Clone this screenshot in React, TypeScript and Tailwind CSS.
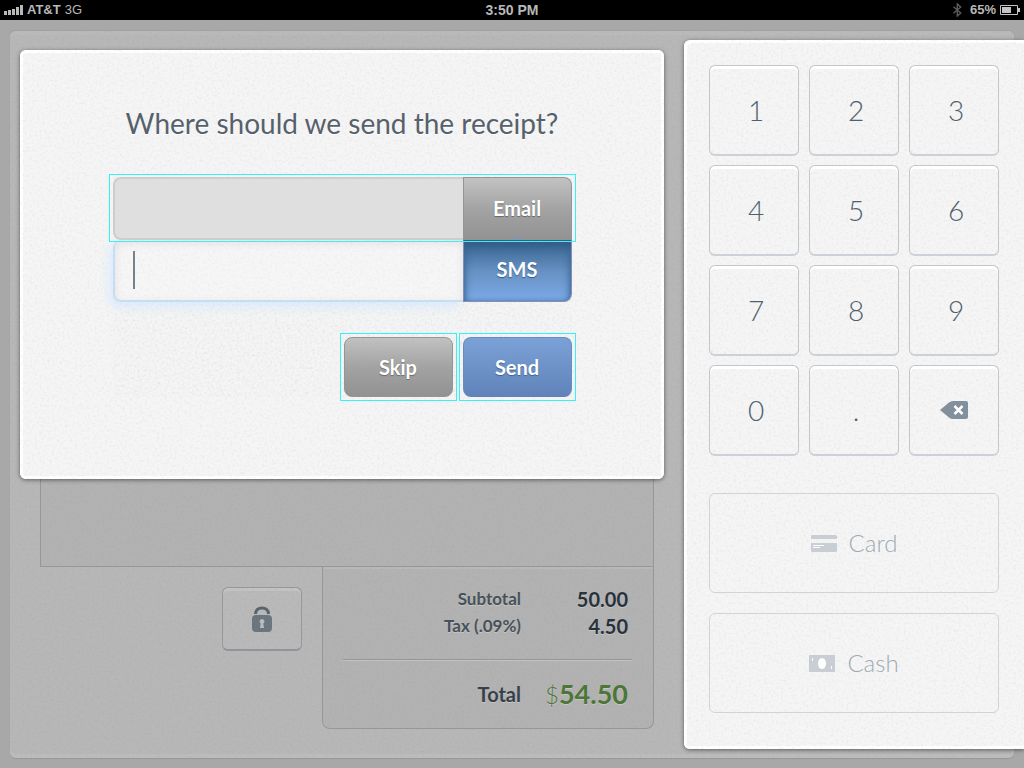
import type { ReactNode } from "react";

const KEYS = ["1", "2", "3", "4", "5", "6", "7", "8", "9", "0", "."];

const Paper = ({ id, strength }: { id: string; strength: string }) => {
  return <svg aria-hidden="true" className={`absolute inset-0 w-full h-full pointer-events-none ${strength}`}>
    <filter id={id}>
      <feTurbulence type="fractalNoise" baseFrequency="0.4" numOctaves="4" seed="8" />
      <feColorMatrix type="matrix" values="0 0 0 0 0.3  0 0 0 0 0.3  0 0 0 0 0.3  2.4 0 0 0 -1.1" />
    </filter>
    <rect width="100%" height="100%" filter={`url(#${id})`} />
  </svg>
}

const StatusBar = () => {
  return <header className="grid grid-cols-3 items-center h-5 px-1 bg-black text-[#b8b8b8] text-[13px] leading-5 font-bold font-['Liberation_Sans',sans-serif]">
    <div className="flex items-center gap-1">
      <svg width="19" height="10" viewBox="0 0 19 10" fill="currentColor" aria-hidden="true">
        <path d="M0 6h3v4H0zM4 5h3v5H4zM8 4h3v6H8zM12 2h3v8h-3zM16 0h3v10h-3z" />
      </svg>
      <span>AT&amp;T</span>
      <span className="font-normal">3G</span>
    </div>
    <div className="text-center text-sm leading-5">3:50 PM</div>
    <div className="flex items-center justify-end gap-1">
      <svg width="9" height="14" viewBox="0 0 9 14" fill="none" stroke="#5c5c5c" strokeWidth="1.4" className="mr-1" aria-hidden="true">
        <path d="M0.500 3.800l7.200 6.200-3.400 3V1l3.400 3L0.500 10.200" />
      </svg>
      <span>65%</span>
      <svg width="20" height="10" viewBox="0 0 20 10" fill="none" aria-hidden="true">
        <path d="M0.500 0.500h17v9h-17z" stroke="#c4c4c4" />
        <path d="M18 3h2v4h-2z" fill="#c4c4c4" />
        <path d="M2 2h9v6H2z" fill="#c4c4c4" />
      </svg>
    </div>
  </header>
}

const Totals = () => {
  return <dl className="w-[332px] h-[162px] pl-5 pr-[21px] pt-[18px] border border-t-0 border-[#979797] rounded-b-lg bg-[#b2b2b2] text-[#465058] font-bold shadow-[inset_0_2px_0_#b9b9b9] [text-shadow:0_1px_0_#c6c6c6]">
    <div className="flex justify-end items-center h-[27px] pr-1">
      <dt className="text-[17px]">Subtotal</dt>
      <dd className="w-[107px] text-right text-xl text-[#252f39]">50.00</dd>
    </div>
    <div className="flex justify-end items-center h-[27px] pr-1">
      <dt className="text-[17px]">Tax (.09%)</dt>
      <dd className="w-[107px] text-right text-xl text-[#252f39]">4.50</dd>
    </div>
    <div className="flex justify-end items-center mt-5 pt-4 pr-1 border-t border-[#959595] shadow-[inset_0_1px_0_#c4c4c4]">
      <dt className="text-xl text-[#343e48]">Total</dt>
      <dd className="w-[107px] text-right text-[27px] leading-9 text-[#4b7535]"><span className="text-2xl font-light">$</span>54.50</dd>
    </div>
  </dl>
}

const Sheet = () => {
  return <section className="relative col-start-1 row-start-1 flex flex-col m-[10px] pl-[30px] pt-[30px] pr-[360px] pb-[29px] rounded-md bg-[#b7b7b7] border-t border-[#a0a0a0] shadow-[inset_0_4px_0_#bababa,inset_0_-4px_0_#bcbcbc,0_1px_1px_#979797]">
    <div className="grow border border-[#979797] bg-[#b2b2b2]" />
    <div className="flex justify-end items-start">
      <button type="button" aria-label="Lock" className="flex items-center justify-center w-20 h-16 mt-5 mr-5 rounded-md border border-[#94999d] border-b-2 border-b-[#8f959b] bg-[#b9b9b9] shadow-[inset_0_3px_0_#c3c3c3]">
        <svg width="22" height="26" viewBox="0 0 22 26" fill="none" aria-hidden="true">
          <path d="M4.500 8C4.500 4 7.500 2 11 2s6.500 2 6.500 6" stroke="#56626d" strokeWidth="3" />
          <rect x="1" y="9" width="20" height="17" rx="4" fill="#6a757e" />
          <path d="M11 13a2.500 2.500 0 0 1 1.300 4.600L13 22H9l.7-4.400A2.500 2.500 0 0 1 11 13z" fill="#bcbcbc" />
        </svg>
      </button>
      <Totals />
    </div>
    <Paper id="sheet-paper" strength="opacity-15" />
  </section>
}

const ReceiptModal = () => {
  return <section role="dialog" aria-labelledby="receipt-title" className="relative grow self-start mt-[30px] pt-[55px] pb-[82px] rounded-md bg-[#f5f5f5] shadow-[inset_0_0_0_3px_#fff,0_1px_4px_rgba(0,0,0,0.5)]">
    <Paper id="modal-paper" strength="opacity-10" />
    <h1 id="receipt-title" className="relative text-center text-[28px] leading-9 text-[#56616c] [text-shadow:0_1px_0_#fff]">Where should we send the receipt?</h1>
    <form className="relative w-full max-w-[459px] mx-auto mt-9 text-xl font-bold text-white">
      <div className="relative z-10 flex h-[63px]">
        <input type="email" aria-label="Email address" className="grow min-w-0 px-5 rounded-l-lg border-2 border-r-0 border-[#cdcdcd] bg-[#dfdfdf]" />
        <button type="button" className="relative w-[109px] pb-0.5 rounded-tr-lg border border-b-0 border-[#959595] bg-linear-to-b from-[#c2c2c2] via-[#a3a3a3] to-[#929292] [text-shadow:0_1px_1px_#666]">
          Email
          <svg width="10" height="5" viewBox="0 0 10 5" className="absolute left-1/2 bottom-0 -translate-x-1/2" aria-hidden="true">
            <path d="M0 5l5-5 5 5z" fill="#8793ac" />
          </svg>
        </button>
        <span className="absolute -inset-x-1 -top-[3px] -bottom-0.5 border border-[#35f2f8] pointer-events-none" />
      </div>
      <div className="relative flex h-[62px]">
        <input type="tel" aria-label="Phone number" className="grow min-w-0 px-5 rounded-l-lg border-2 border-r-0 border-t-0 border-[#c8def4] bg-[#f6f6f6] shadow-[inset_0_3px_8px_#e2e2e2,-3px_4px_12px_#d8eaff]" />
        <span className="absolute left-5 top-[11px] w-0.5 h-[38px] bg-[#77818b]" />
        <button type="button" aria-pressed="true" className="relative w-[109px] pb-1 rounded-br-lg border border-[#8190b5] border-t-[#42597c] bg-linear-to-b from-[#35628e] via-[#6591c3] via-50% to-[#7daaea] shadow-[inset_0_4px_8px_#2c5a85,inset_0_0_4px_#5b86b8] [text-shadow:0_1px_1px_#345680]">SMS</button>
      </div>
      <Paper id="field-paper" strength="opacity-8" />
      <div className="flex justify-end gap-[10px] mt-[35px]">
        <button type="button" className="w-[109px] h-[60px] rounded-lg border border-[#959595] bg-linear-to-b from-[#c2c2c2] via-[#a3a3a3] to-[#929292] [text-shadow:0_1px_1px_#666]"><Ring>Skip</Ring></button>
        <button type="submit" className="w-[109px] h-[60px] rounded-lg border border-[#668cc2] border-b-[#5f81b6] bg-linear-to-b from-[#7ba2d8] to-[#5f83ba] [text-shadow:0_1px_1px_#3f5f8f]"><Ring>Send</Ring></button>
      </div>
    </form>
  </section>
}

// square frame around a rounded button
const Ring = ({ children }: { children: ReactNode }) => {
  return <span className="relative flex items-center justify-center w-full h-full">
    <span className="absolute -inset-[5px] border border-[#35f2f8]" />
    {children}
  </span>
}

const Keypad = () => {
  return <aside className="relative w-[340px] shrink-0 mt-5 mb-[19px] px-[25px] pt-[25px] pb-9 rounded-l-md bg-[#f5f5f5] shadow-[inset_3px_3px_0_#fff,inset_0_-3px_0_#fff,0_1px_4px_rgba(0,0,0,0.5)] text-[28px] text-[#4f5f6d]">
    <Paper id="keypad-paper" strength="opacity-10" />
    <div className="relative grid grid-cols-3 gap-[10px]">
      {KEYS.map((key) => (
        <button key={key} type="button" className="h-[91px] -mb-px pl-1 rounded-md border border-[#c2c7cc] border-b-2 border-b-[#cbd1d7] shadow-[inset_0_3px_0_#fff] font-light">{key}</button>
      ))}
      <button type="button" aria-label="Delete" className="flex items-center justify-center h-[91px] -mb-px rounded-md border border-[#c2c7cc] border-b-2 border-b-[#cbd1d7] shadow-[inset_0_3px_0_#fff]">
        <svg width="28" height="18" viewBox="0 0 28 18" aria-hidden="true">
          <path d="M0 9L9 1.500Q11 0 13 0h13q2 0 2 2v14q0 2-2 2H13q-2 0-4-1.500z" fill="#82909b" />
          <path d="M14.500 5l8 8M22.500 5l-8 8" stroke="#fff" strokeWidth="2.500" />
        </svg>
      </button>
    </div>
    <div className="relative grid gap-5 mt-[38px] font-light text-2xl text-[#a0aab2]">
      <button type="button" disabled className="flex items-center justify-center gap-3 h-[100px] rounded-md border border-[#cfd4d9]">
        <svg width="26" height="17" viewBox="0 0 26 17" aria-hidden="true">
          <path d="M1 0h24l1 1v3H0V1zM0 8h26v8l-1 1H1l-1-1z" fill="#c8ced3" />
          <path d="M2 10.500h11M2 12.500h7" stroke="#fff" />
        </svg>
        Card
      </button>
      <button type="button" disabled className="flex items-center justify-center gap-3 h-[100px] rounded-md border border-[#cfd4d9]">
        <svg width="26" height="17" viewBox="0 0 26 17" aria-hidden="true">
          <path d="M0 0h26v17H0z" fill="#c8ced3" />
          <ellipse cx="13" cy="8.500" rx="4" ry="5.500" fill="#fff" />
          <path d="M3.500 3v3M22.500 11v3" stroke="#fff" />
        </svg>
        Cash
      </button>
    </div>
  </aside>
}

const App = () => {
  return <div className="flex flex-col min-h-screen overflow-hidden bg-[#a8a8a8] font-[Lato,sans-serif]">
    <StatusBar />
    <main className="grid grow">
      <Sheet />
      <div className="relative col-start-1 row-start-1 flex gap-5 pl-5">
        <ReceiptModal />
        <Keypad />
      </div>
    </main>
  </div>
}

export default App;
